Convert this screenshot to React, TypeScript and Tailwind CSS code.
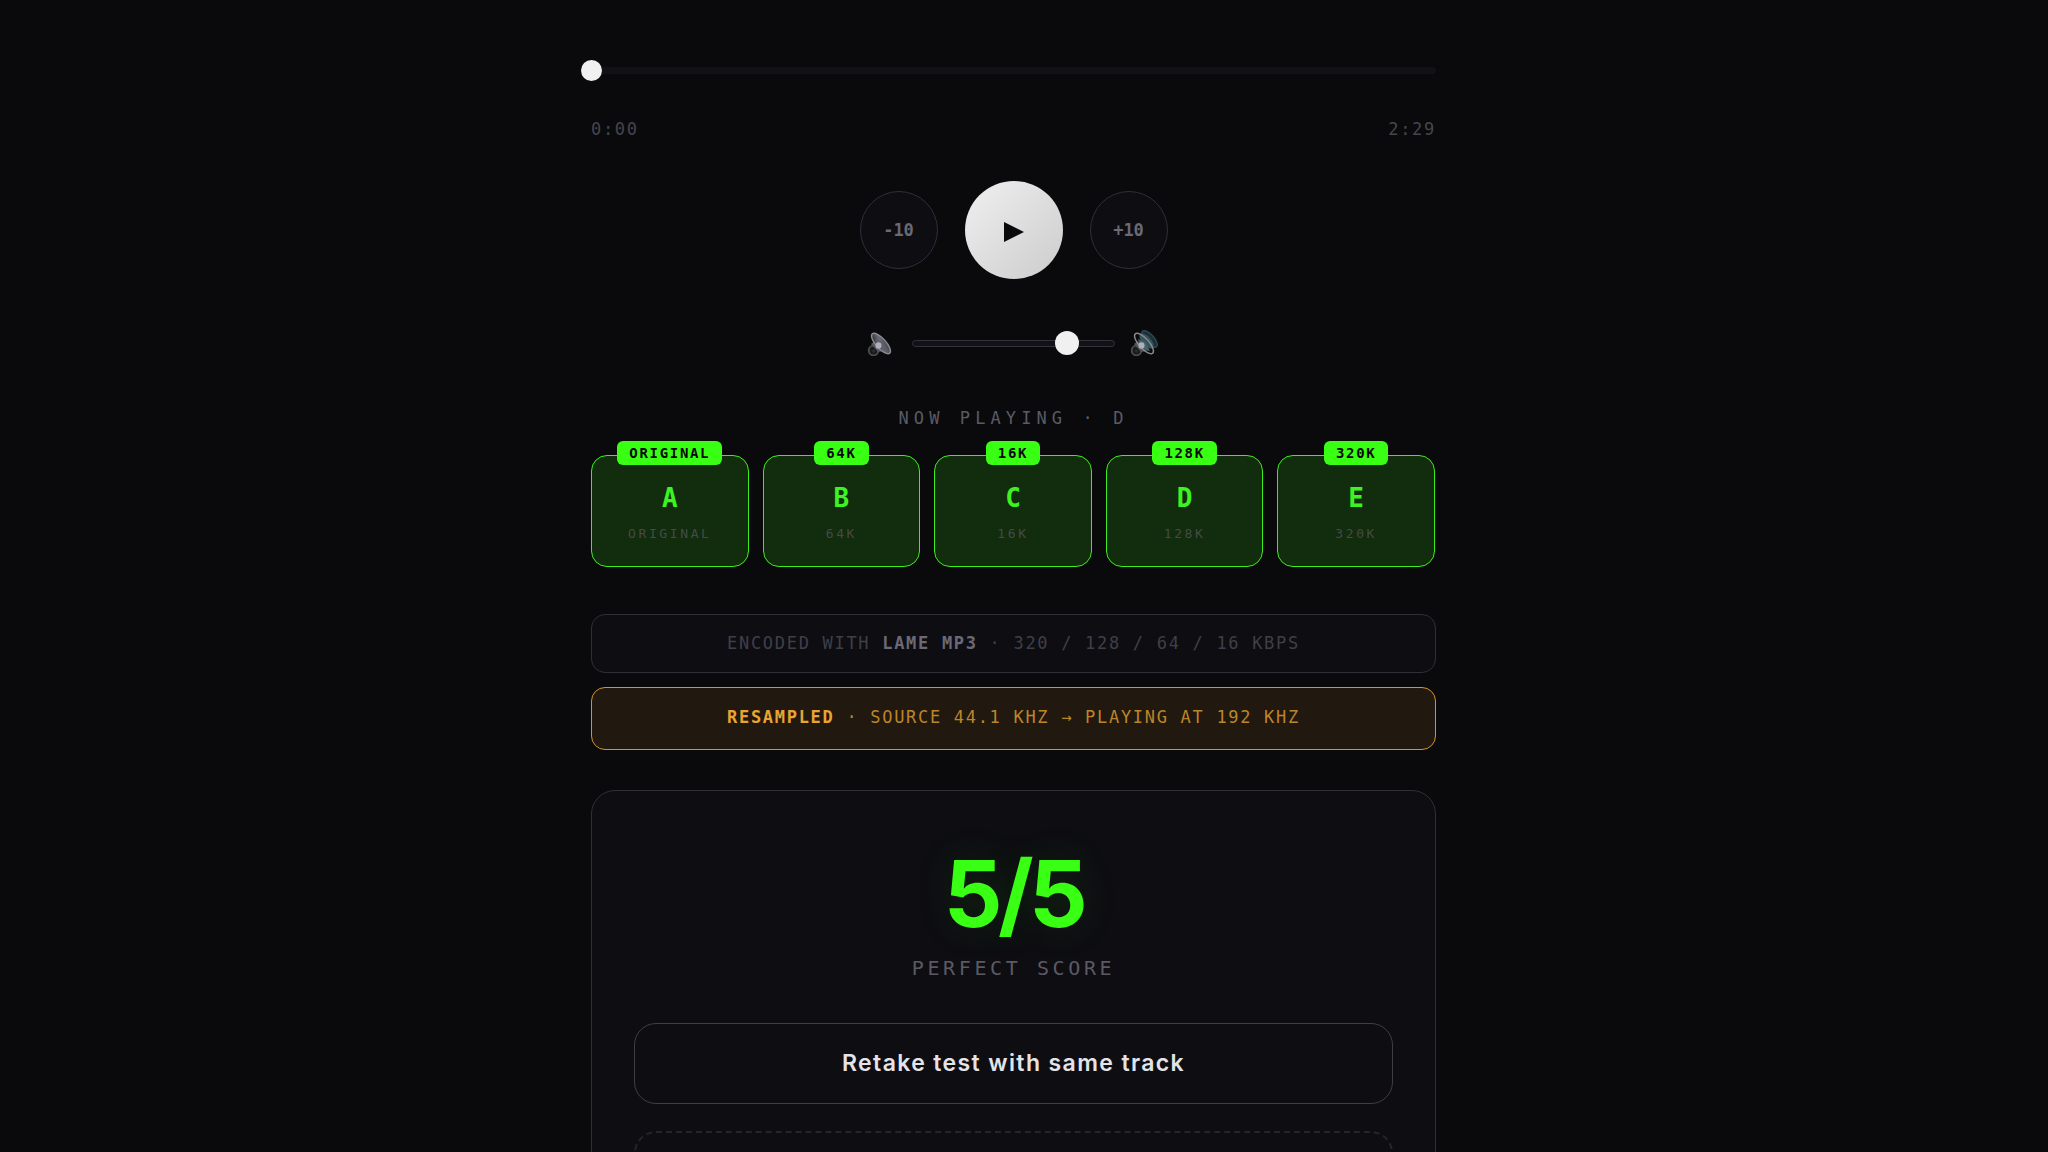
import React, { useState } from 'react';

interface Variant {
  letter: string;
  quality: string;
}

const VARIANTS: Variant[] = [
  { letter: 'A', quality: 'ORIGINAL' },
  { letter: 'B', quality: '64K' },
  { letter: 'C', quality: '16K' },
  { letter: 'D', quality: '128K' },
  { letter: 'E', quality: '320K' },
];

const DURATION = 149;

const formatTime = (s: number) => `${Math.floor(s / 60)}:${String(s % 60).padStart(2, '0')}`;

const SpeakerIcon: React.FC<{ loud?: boolean }> = ({ loud = false }) => (
  <svg viewBox="0 0 36 26" className="h-[26px] w-9 shrink-0" aria-hidden="true">
    <defs>
      <linearGradient id="cone" x1="0" y1="0" x2="1" y2="1">
        <stop offset="0" stopColor="#1c1d20" />
        <stop offset="0.5" stopColor="#6a6b76" />
        <stop offset="1" stopColor="#35363e" />
      </linearGradient>
    </defs>
    <circle cx="9.5" cy="20.5" r="4.8" fill="#1a1b1d" stroke="#4c4d50" strokeWidth="1.8" />
    <circle cx="9.5" cy="21" r="1.6" fill="#2c2d30" />
    <path d="M7 14 L11 11 L20 21 L14 22 Z" fill="#56575c" />
    {loud && (
      <>
        <ellipse cx="22.5" cy="9" rx="4.5" ry="10.5" transform="rotate(-42 22.5 9)" fill="#1a3036" stroke="#2f4b52" strokeWidth="1.3" />
        <ellipse cx="19.5" cy="11" rx="4.5" ry="9.5" transform="rotate(-42 19.5 11)" fill="#36545c" />
      </>
    )}
    <ellipse
      cx="17"
      cy="13.5"
      rx="5"
      ry="13"
      transform="rotate(-42 17 13.5)"
      fill={loud ? 'none' : 'url(#cone)'}
      stroke="#8b8c90"
      strokeWidth="1.4"
    />
    <path d="M11 9 Q12 14 15 17 Q19 21 23 21 L18 12 Z" fill={loud ? '#4b626a' : '#5d5e67'} />
    <ellipse cx="14.5" cy="15.5" rx="3" ry="3.2" fill="#aeafbb" />
  </svg>
);

const SkipButton: React.FC<{ label: string; onClick: () => void }> = ({ label, onClick }) => (
  <button
    onClick={onClick}
    className="h-[78px] w-[78px] rounded-full border border-[#302f38] bg-[#0e0d12] pt-0.5 text-[17px] font-bold text-[#6a6975] cursor-pointer"
  >
    {label}
  </button>
);

const VariantCard: React.FC<{ variant: Variant; onSelect: () => void }> = ({ variant, onSelect }) => (
  <button
    onClick={onSelect}
    className="relative flex h-28 flex-col items-center rounded-2xl border border-[#3bee1c] bg-[#122c0e] pt-6 cursor-pointer"
  >
    <span className="absolute -top-[15px] rounded-md bg-[#39ff14] px-3 text-[14px] leading-6 font-bold tracking-[0.12em] text-[#0a0a0c]">
      {variant.quality}
    </span>
    <span className="text-[26px] leading-9 font-bold text-[#3df321]">{variant.letter}</span>
    <span className="mt-2 text-[13px] leading-5 tracking-[0.2em] text-[#444b47]">{variant.quality}</span>
  </button>
);

export default function App() {
  const [position, setPosition] = useState(0);
  const [volume, setVolume] = useState(80);
  const [playing, setPlaying] = useState('D');

  const skip = (delta: number) => setPosition(p => Math.min(DURATION, Math.max(0, p + delta)));

  return (
    <div className="h-screen overflow-hidden bg-[#0a0a0c] pr-[21px] font-['DejaVu_Sans_Mono',monospace]">
      <main className="mx-auto w-full max-w-[845px] pt-[67px]">
        {/* Seek bar */}
        <div className="relative h-[7px] rounded-sm bg-[#121116]">
          <input
            type="range"
            aria-label="Seek"
            min={0}
            max={DURATION}
            value={position}
            onChange={e => setPosition(Number(e.target.value))}
            className="absolute -left-2.5 -top-[7px] h-[21px] w-[calc(100%+20px)] appearance-none bg-transparent cursor-pointer [&::-webkit-slider-thumb]:h-[21px] [&::-webkit-slider-thumb]:w-[21px] [&::-webkit-slider-thumb]:appearance-none [&::-webkit-slider-thumb]:rounded-full [&::-webkit-slider-thumb]:bg-[#f0f0f0]"
          />
        </div>
        <div className="mt-[43px] flex justify-between text-[17px] leading-6 tracking-widest text-[#46454d]">
          <span>{formatTime(position)}</span>
          <span>{formatTime(DURATION)}</span>
        </div>

        {/* Transport */}
        <div className="mt-10 flex items-center justify-center gap-[27px]">
          <SkipButton label="-10" onClick={() => skip(-10)} />
          <button
            aria-label="Play"
            className="flex h-[98px] w-[98px] items-center justify-center rounded-full bg-linear-135 from-[#f0f0f0] to-[#cccccc] cursor-pointer"
          >
            <svg viewBox="0 0 20 20" className="mt-1 h-5 w-5 fill-[#0a0a0c]">
              <path d="M0 0 L20 10 L0 20 Z" />
            </svg>
          </button>
          <SkipButton label="+10" onClick={() => skip(10)} />
        </div>

        {/* Volume */}
        <div className="mt-[51px] flex items-center justify-center gap-3">
          <SpeakerIcon />
          <input
            type="range"
            aria-label="Volume"
            min={0}
            max={100}
            value={volume}
            onChange={e => setVolume(Number(e.target.value))}
            className="h-6 w-[203px] appearance-none bg-transparent cursor-pointer [&::-webkit-slider-runnable-track]:h-[7px] [&::-webkit-slider-runnable-track]:rounded-full [&::-webkit-slider-runnable-track]:border [&::-webkit-slider-runnable-track]:border-[#33323b] [&::-webkit-slider-runnable-track]:bg-[#121116] [&::-webkit-slider-thumb]:-mt-[10px] [&::-webkit-slider-thumb]:h-6 [&::-webkit-slider-thumb]:w-6 [&::-webkit-slider-thumb]:appearance-none [&::-webkit-slider-thumb]:rounded-full [&::-webkit-slider-thumb]:bg-[#f0f0f0]"
          />
          <SpeakerIcon loud />
        </div>

        <p className="mt-[50px] text-center text-[17px] leading-6 tracking-[0.3em] text-[#5b5a64]">
          NOW PLAYING · {playing}
        </p>

        {/* Variants */}
        <div className="mt-[25px] grid grid-cols-5 gap-3.5 pr-px">
          {VARIANTS.map(v => (
            <VariantCard key={v.letter} variant={v} onSelect={() => setPlaying(v.letter)} />
          ))}
        </div>

        {/* Notices */}
        <div className="mt-[47px] space-y-3.5 text-center text-[17px] leading-[27px] tracking-widest">
          <p className="rounded-[14px] border border-[#302f38] bg-[#0e0d12] py-[15px] text-[#403f48]">
            ENCODED WITH <strong className="text-[#6a6975]">LAME MP3</strong> · 320 / 128 / 64 / 16 KBPS
          </p>
          <p className="rounded-[14px] border border-[#d6932d] bg-[#21180f] pt-4 pb-[18px] text-[#bd8529]">
            <strong className="text-[#e9a432]">RESAMPLED</strong> · SOURCE 44.1 KHZ → PLAYING AT 192 KHZ
          </p>
        </div>

        {/* Result */}
        <section className="mt-10 rounded-3xl border border-[#302f38] bg-[#0e0d12] px-[42px] pt-[55px] pb-10 text-center">
          <div className="font-['Inter',sans-serif] text-[92px] leading-[96px] font-bold tracking-tighter text-[#39ff14] [text-shadow:0_0_40px_rgba(57,255,20,0.12)]">
            5/5
          </div>
          <p className="mt-3 text-[20px] leading-7 tracking-[0.18em] text-[#5b5a64]">PERFECT SCORE</p>
          <button className="mt-[41px] h-[81px] w-full rounded-[22px] border border-[#3f3e47] font-['Inter',sans-serif] text-[23px] font-semibold tracking-[0.06em] text-[#e4e4e8] cursor-pointer">
            Retake test with same track
          </button>
          <button
            aria-label="New test"
            className="mt-[27px] h-[81px] w-full rounded-[22px] border-2 border-dashed border-[#26252b] cursor-pointer"
          />
        </section>
      </main>
    </div>
  );
}
